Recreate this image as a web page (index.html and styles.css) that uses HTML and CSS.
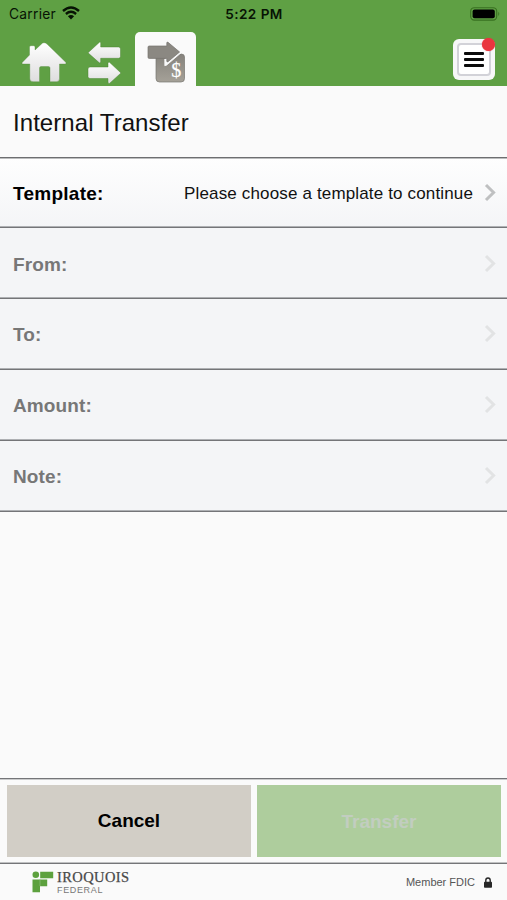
FILE: index.html
```html
<!DOCTYPE html>
<html lang="en">
<head>
<meta charset="utf-8">
<title>Internal Transfer</title>
<link rel="stylesheet" href="styles.css">
</head>
<body>
<div class="app">
  <header class="top">
    <div class="status">
      <div class="carrier"><span class="carrier-name">Carrier</span>
        <svg width="18" height="14" viewBox="0 0 18 14" fill="none" stroke="#071304" stroke-width="2.4"><path d="M1 5Q9 -2 17 5M3.9 8Q9 3.7 14.1 8"/><path d="M9 13.4L5.9 10.2Q9 7.8 12.1 10.2Z" fill="#071304" stroke="none"/></svg>
      </div>
      <div class="clock">5:22 PM</div>
      <svg class="battery" width="31" height="14" viewBox="0 0 31 14"><rect x=".7" y=".7" width="26" height="12.4" rx="3.6" fill="none" stroke="#397020" stroke-width="1.1"/><rect x="2.6" y="2.5" width="22.2" height="8.8" rx="2" fill="#000"/><path d="M28.3 4.8Q30.2 6.9 28.3 9Z" fill="#397020"/></svg>
    </div>
    <nav class="tabs">
      <svg class="home" width="46" height="41" viewBox="0 0 46 41">
        <defs><linearGradient id="light" x1="0" y1="0" x2="0" y2="1"><stop offset="0" stop-color="#fff"/><stop offset="1" stop-color="#deddde"/></linearGradient></defs>
        <path d="M23 .7Q24.5.7 26 2L45 20.5Q45.5 22 44 22H38.5V36.5Q38.5 39.7 35.5 39.7H29V26Q29 24.5 27.5 24.5H20Q18.5 24.5 18.5 26V39.7H12Q8.8 39.7 8.8 36.5V22H2Q.3 22 1.2 20.5L8.5 13V5Q8.5 3.7 10 3.7H12.5Q14 3.7 14 5V8L20.5 2Q21.5.7 23 .7Z" fill="url(#light)" stroke="#50883a" stroke-opacity=".5" stroke-width=".7"/>
      </svg>
      <svg class="swap" width="36" height="44" viewBox="0 0 36 44"><g fill="url(#light)" stroke="#47812f" stroke-opacity=".65" stroke-width=".7"><path d="M1 11.8L12.5 1.2Q13.7.7 13.7 2.5V6H31.5Q33.5 6 33.5 8V15.5Q33.5 17.3 31.5 17.3H13.7V20.5Q13.7 22.5 12.3 21.8Z"/><path d="M34 32L22.5 21.3Q21 20.7 21 22.5V26H3Q1 26 1 28V35.7Q1 37.5 3 37.5H21V41Q21 43 22.5 42.4Z"/></g></svg>
      <div class="tab-active">
        <svg width="41" height="43" viewBox="0 0 41 43">
          <defs><linearGradient id="stone" x1="0" y1="0" x2="0" y2="1"><stop offset="0" stop-color="#85827c"/><stop offset="1" stop-color="#a5a198"/></linearGradient></defs>
          <path d="M9.5 13H34.2Q37.5 13 37.5 16V37.5Q37.5 41 34 41H12.5Q9 41 9 37.5V14Z" fill="url(#stone)" stroke="#777570" stroke-width=".7"/>
          <path d="M19 12H34L33.2 12.5L19.5 24.2L17.8 24.7V18H19Z" fill="#fafafa" stroke="#fafafa" stroke-width=".8"/>
          <path d="M1 6.2Q1 5 2.2 5H19.8V2Q19.8.6 21 1.3L32.6 11L21 20.7Q19.8 21.4 19.8 20V17.4H2.2Q1 17.4 1 16.2Z" fill="#8b8882" stroke="#75736e" stroke-width=".7"/>
          <text class="dollar" x="24.3" y="35.6">$</text>
        </svg>
      </div>
      <div class="menu"><div class="menu-inner"><i></i><i></i><i></i></div><b class="badge"></b></div>
    </nav>
  </header>
  <h1 class="title"><span>Internal Transfer</span></h1>
  <main class="rows">
    <div class="row ready"><span class="label">Template:</span><span class="value">Please choose a template to continue</span><svg class="chev" width="12" height="20" viewBox="0 0 12 20"><path d="M2 2L9.6 9.5L2 17"/></svg></div>
    <div class="row"><span class="label">From:</span><svg class="chev" width="12" height="20" viewBox="0 0 12 20"><path d="M2 2L9.6 9.5L2 17"/></svg></div>
    <div class="row"><span class="label">To:</span><svg class="chev" width="12" height="20" viewBox="0 0 12 20"><path d="M2 2L9.6 9.5L2 17"/></svg></div>
    <div class="row"><span class="label">Amount:</span><svg class="chev" width="12" height="20" viewBox="0 0 12 20"><path d="M2 2L9.6 9.5L2 17"/></svg></div>
    <div class="row"><span class="label">Note:</span><svg class="chev" width="12" height="20" viewBox="0 0 12 20"><path d="M2 2L9.6 9.5L2 17"/></svg></div>
  </main>
  <div class="actions"><button class="cancel">Cancel</button><button class="transfer">Transfer</button></div>
  <footer class="foot">
    <svg class="mark" width="22" height="22" viewBox="0 0 22 22" fill="#5da13e"><circle cx="3.8" cy="3.8" r="3.3"/><path d="M8.2.7H21.2V7.2H8.2ZM.5 8.4H15.2V15.2H8V21.3H.5Z"/><path d="M8 8.4V15" stroke="#8fbd7b" stroke-width=".7"/></svg>
    <div class="brand"><span class="iroquois">IROQUOIS</span><span class="federal">FEDERAL</span></div>
    <span class="fdic">Member FDIC</span>
    <svg class="lock" width="8" height="11" viewBox="0 0 8 11"><rect y="4.7" width="8" height="6" rx=".8" fill="#272727"/><path d="M1.8 5V3.2Q1.8 1 4 1T6.2 3.2V5" fill="none" stroke="#272727" stroke-width="1.4"/></svg>
  </footer>
</div>
</body>
</html>
```
FILE: styles.css
```css
* { box-sizing: border-box; }
body { margin: 0; background: #fafafa; font-family: "Liberation Sans", Arial, sans-serif; color: #111; }
.app { width: 507px; height: 900px; display: flex; flex-direction: column; overflow: hidden; }
svg { display: block; flex: none; }
.top { height: 86px; background: #5fa044; display: flex; flex-direction: column; }
.status { height: 28px; padding: 0 7px 0 9px; display: grid; grid-template-columns: 1fr auto 1fr; align-items: center; font-family: Inter, sans-serif; color: #071304; }
.carrier { display: flex; align-items: center; gap: 6px; font-size: 13.8px; letter-spacing: .25px; margin-top: -1px; }
.carrier svg { margin-top: -1px; }
.clock { font-size: 13.6px; font-weight: 600; letter-spacing: .45px; margin-left: -1px; }
.battery { justify-self: end; margin: -1px -1px 0 0; }
.tabs { height: 58px; display: flex; align-items: flex-start; padding: 0 12px 0 21px; }
.home { margin-top: 14px; }
.swap { margin: 13px 0 0 20px; }
.tab-active { margin: 4px 0 0 12px; width: 61px; height: 55px; padding: 9px 0 0 12px; background: #fafafa; border-radius: 5px 5px 0 0; }
.dollar { font: 20px "Liberation Serif", serif; fill: #fff; stroke: #fff; stroke-width: .2px; }
.menu { position: relative; margin: 11px 0 0 auto; width: 42px; height: 41px; padding: 4px; background: #f7f7f8; border-radius: 6px; }
.menu-inner { width: 34px; height: 33px; border: 2px solid #d2d2d8; border-radius: 4px; background: #fff; display: flex; flex-direction: column; align-items: center; justify-content: center; gap: 3px; }
.menu-inner i { width: 20px; height: 3px; background: #0b0b0b; border-radius: 1px; }
.badge { position: absolute; right: 0; top: -1px; width: 13px; height: 13px; border-radius: 50%; background: #e9363f; box-shadow: 0 0 1px #e9363f; }
.title { margin: 0; height: 72px; padding: 3px 13px 0; display: flex; align-items: center; font-size: 24px; font-weight: 400; letter-spacing: .06px; border-bottom: 1px solid #6d6e70; box-shadow: 0 1px 0 #bcbdbe; position: relative; }
.row { height: 71px; display: flex; align-items: center; padding: 2px 11px 0 13px; background: #f4f5f7; border-bottom: 1px solid #747578; box-shadow: inset 0 -1px 0 #aeb0b3; color: #777; }
.row:nth-child(2) { padding-top: 3px; }
.ready { height: 70px; background: linear-gradient(#fefefe, #f4f5f7); color: #111; }
.label { font-size: 19px; font-weight: 700; letter-spacing: .12px; }
.ready .label { letter-spacing: .26px; color: #000; }
.value { margin-left: auto; font-size: 17px; margin-right: 11px; letter-spacing: .15px; }
.chev { margin-left: auto; margin-top: -2px; fill: none; stroke: #e2e3e4; stroke-width: 3; }
.ready .chev { margin-left: 0; stroke: #bfc0c1; }
.actions { margin-top: auto; height: 86px; padding: 6px 6px 6px 7px; display: grid; grid-template-columns: 244px 244px; gap: 6px; border-top: 1px solid #747578; border-bottom: 1px solid #747578; box-shadow: inset 0 1px 0 #cacbcc, inset 0 -1px 0 #c0c1c2; }
button { border: 0; padding: 0; font: 700 19px "Liberation Sans", Arial, sans-serif; }
.cancel { background: #d2cec6; color: #000; }
.transfer { background: #aecd9d; color: #c2cdc0; padding-top: 2px; }
.foot { height: 36px; padding: 0 15px 0 32px; display: flex; align-items: flex-start; }
.mark { margin-top: 7px; }
.brand { margin: 5px 0 0 3px; display: flex; flex-direction: column; }
.iroquois { font: 14.5px/16px "Liberation Serif", serif; letter-spacing: .4px; color: #494949; -webkit-text-stroke: .25px #494949; }
.federal { font-size: 9px; line-height: 10px; letter-spacing: .65px; color: #777; }
.fdic { margin: 12px 9px 0 auto; font-size: 11px; line-height: 13px; color: #555; }
.lock { margin-top: 13px; }
```
